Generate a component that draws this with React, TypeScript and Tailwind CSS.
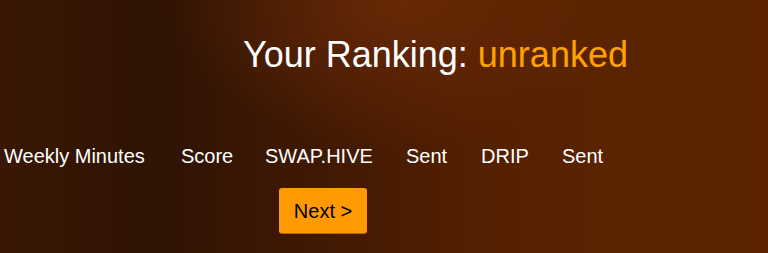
export default function App() {
  const cols = [
    { label: "Weekly Minutes", w: "w-[177px]" },
    { label: "Score", w: "w-[84px]" },
    { label: "SWAP.HIVE", w: "w-[141px]" },
    { label: "Sent", w: "w-[75px]" },
    { label: "DRIP", w: "w-[81px]" },
    { label: "Sent", w: "w-[80px]" },
  ];
  return (
    <div
      className="w-[768px] h-[253px] overflow-hidden bg-[radial-gradient(ellipse_30%_60%_at_52%_0%,rgba(108,43,7,0.85)_0%,rgba(108,43,7,0)_100%),linear-gradient(90deg,#391704_0%,#2f1304_20%,#3f1803_40%,#521f01_60%,#5a2400_80%,#5c2400_100%)] text-white"
      style={{ fontFamily: '"Liberation Sans", Arial, sans-serif' }}
    >
      <div className="pt-[37px] pl-[243px] text-[36px] leading-[36px] whitespace-nowrap">
        Your Ranking: <span className="text-[#ffa200]">unranked</span>
      </div>
      <div className="mt-[73px] pl-[4px] flex text-[20px] leading-[20px] whitespace-nowrap">
        {cols.map((c, i) => (
          <div key={i} className={c.w}>
            {c.label}
          </div>
        ))}
      </div>
      <div className="mt-[22px] pl-[279px]">
        <button className="w-[88px] h-[45px] rounded-[3px] bg-[#ff9a00] text-black text-[20px] leading-[20px] px-0 text-center whitespace-nowrap shadow-[0_1px_0_#b86a00]">
          Next &gt;
        </button>
      </div>
    </div>
  );
}
